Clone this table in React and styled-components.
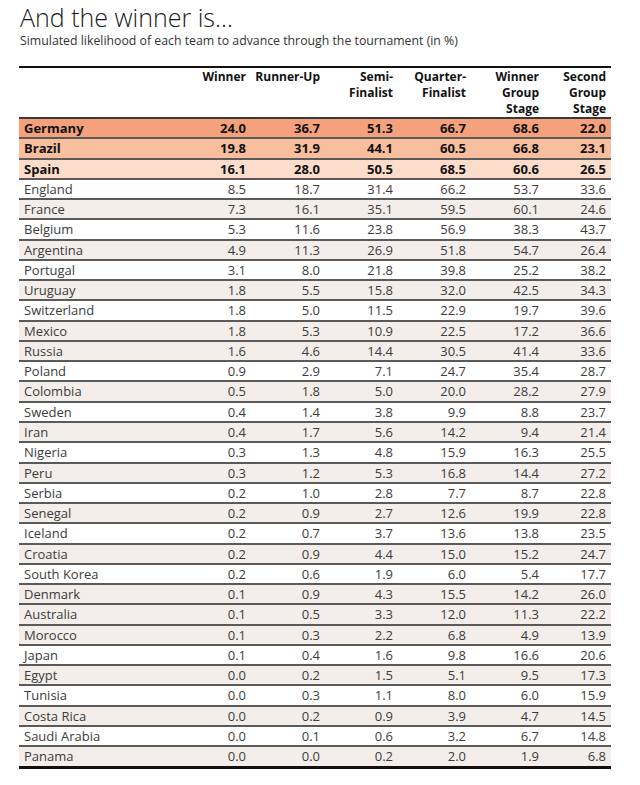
import React from "react";
import styled, { createGlobalStyle } from "styled-components";

const GlobalStyle = createGlobalStyle`
  body {
    margin: 0;
    background: #ffffff;
    font-family: "Open Sans", "Noto Sans", sans-serif;
  }
`;

const Page = styled.div`
  padding: 2px 0 0 19px;
  width: 592px;
`;

const Title = styled.h1`
  margin: 0;
  font-size: 25px;
  line-height: 30px;
  font-weight: 300;
  color: #1a1a1a;
  padding-left: 1px;
`;

const Subtitle = styled.p`
  margin: 1px 0 0;
  font-size: 12.3px;
  line-height: 16px;
  color: #333;
  padding-left: 1px;
`;

const Table = styled.table`
  margin-top: 17px;
  width: 592px;
  table-layout: fixed;
  border-collapse: separate;
  border-spacing: 0;
  border-top: 2px solid #111;
`;

const HeadCell = styled.th`
  font-size: 12px;
  font-weight: 700;
  line-height: 16px;
  color: #111;
  text-align: right;
  vertical-align: top;
  padding: 1px 5px 0 0;
  border-bottom: 2px solid #3a3a3a;
`;

const shades = {
  first: "#f5a17c",
  second: "#f9be9e",
  third: "#fcdcca",
  beige: "#f3eee9",
  plain: "#ffffff",
};

const Row = styled.tr`
  background: ${(p) => shades[p.$shade]};
`;

const Cell = styled.td`
  font-size: 13px;
  line-height: 18.27px;
  padding: 0 5px 0 0;
  text-align: right;
  white-space: nowrap;
  color: ${(p) => (p.$bold ? "#111" : "#3c3c3c")};
  font-weight: ${(p) => (p.$bold ? 700 : 400)};
  border-bottom: ${(p) => (p.$last ? "3px solid #111" : "2px solid #5a5a5a")};
`;

const NameCell = styled(Cell)`
  text-align: left;
  padding: 0 0 0 5px;
`;

const columns = [
  { w: 160, label: [] },
  { w: 72, label: ["Winner"] },
  { w: 74, label: ["Runner-Up"] },
  { w: 73, label: ["Semi-", "Finalist"] },
  { w: 73, label: ["Quarter-", "Finalist"] },
  { w: 73, label: ["Winner", "Group", "Stage"] },
  { w: 67, label: ["Second", "Group", "Stage"] },
];

const teams = [
  ["Germany", "24.0", "36.7", "51.3", "66.7", "68.6", "22.0", "first"],
  ["Brazil", "19.8", "31.9", "44.1", "60.5", "66.8", "23.1", "second"],
  ["Spain", "16.1", "28.0", "50.5", "68.5", "60.6", "26.5", "third"],
  ["England", "8.5", "18.7", "31.4", "66.2", "53.7", "33.6", "plain"],
  ["France", "7.3", "16.1", "35.1", "59.5", "60.1", "24.6", "beige"],
  ["Belgium", "5.3", "11.6", "23.8", "56.9", "38.3", "43.7", "plain"],
  ["Argentina", "4.9", "11.3", "26.9", "51.8", "54.7", "26.4", "beige"],
  ["Portugal", "3.1", "8.0", "21.8", "39.8", "25.2", "38.2", "plain"],
  ["Uruguay", "1.8", "5.5", "15.8", "32.0", "42.5", "34.3", "beige"],
  ["Switzerland", "1.8", "5.0", "11.5", "22.9", "19.7", "39.6", "plain"],
  ["Mexico", "1.8", "5.3", "10.9", "22.5", "17.2", "36.6", "beige"],
  ["Russia", "1.6", "4.6", "14.4", "30.5", "41.4", "33.6", "beige"],
  ["Poland", "0.9", "2.9", "7.1", "24.7", "35.4", "28.7", "plain"],
  ["Colombia", "0.5", "1.8", "5.0", "20.0", "28.2", "27.9", "beige"],
  ["Sweden", "0.4", "1.4", "3.8", "9.9", "8.8", "23.7", "plain"],
  ["Iran", "0.4", "1.7", "5.6", "14.2", "9.4", "21.4", "beige"],
  ["Nigeria", "0.3", "1.3", "4.8", "15.9", "16.3", "25.5", "plain"],
  ["Peru", "0.3", "1.2", "5.3", "16.8", "14.4", "27.2", "beige"],
  ["Serbia", "0.2", "1.0", "2.8", "7.7", "8.7", "22.8", "plain"],
  ["Senegal", "0.2", "0.9", "2.7", "12.6", "19.9", "22.8", "beige"],
  ["Iceland", "0.2", "0.7", "3.7", "13.6", "13.8", "23.5", "plain"],
  ["Croatia", "0.2", "0.9", "4.4", "15.0", "15.2", "24.7", "beige"],
  ["South Korea", "0.2", "0.6", "1.9", "6.0", "5.4", "17.7", "plain"],
  ["Denmark", "0.1", "0.9", "4.3", "15.5", "14.2", "26.0", "beige"],
  ["Australia", "0.1", "0.5", "3.3", "12.0", "11.3", "22.2", "beige"],
  ["Morocco", "0.1", "0.3", "2.2", "6.8", "4.9", "13.9", "beige"],
  ["Japan", "0.1", "0.4", "1.6", "9.8", "16.6", "20.6", "plain"],
  ["Egypt", "0.0", "0.2", "1.5", "5.1", "9.5", "17.3", "beige"],
  ["Tunisia", "0.0", "0.3", "1.1", "8.0", "6.0", "15.9", "plain"],
  ["Costa Rica", "0.0", "0.2", "0.9", "3.9", "4.7", "14.5", "beige"],
  ["Saudi Arabia", "0.0", "0.1", "0.6", "3.2", "6.7", "14.8", "plain"],
  ["Panama", "0.0", "0.0", "0.2", "2.0", "1.9", "6.8", "beige"],
];

export default function App() {
  return (
    <Page>
      <GlobalStyle />
      <Title>And the winner is…</Title>
      <Subtitle>
        Simulated likelihood of each team to advance through the tournament (in %)
      </Subtitle>
      <Table>
        <colgroup>
          {columns.map((c, i) => (
            <col key={i} style={{ width: c.w }} />
          ))}
        </colgroup>
        <thead>
          <tr>
            {columns.map((c, i) => (
              <HeadCell key={i}>
                {c.label.map((line, j) => (
                  <div key={j}>{line}</div>
                ))}
              </HeadCell>
            ))}
          </tr>
        </thead>
        <tbody>
          {teams.map((t, i) => {
            const shade = t[7];
            const bold = i < 3;
            const last = i === teams.length - 1;
            return (
              <Row key={t[0]} $shade={shade}>
                <NameCell $bold={bold} $last={last}>
                  {t[0]}
                </NameCell>
                {t.slice(1, 7).map((v, j) => (
                  <Cell key={j} $bold={bold} $last={last}>
                    {v}
                  </Cell>
                ))}
              </Row>
            );
          })}
        </tbody>
      </Table>
    </Page>
  );
}
